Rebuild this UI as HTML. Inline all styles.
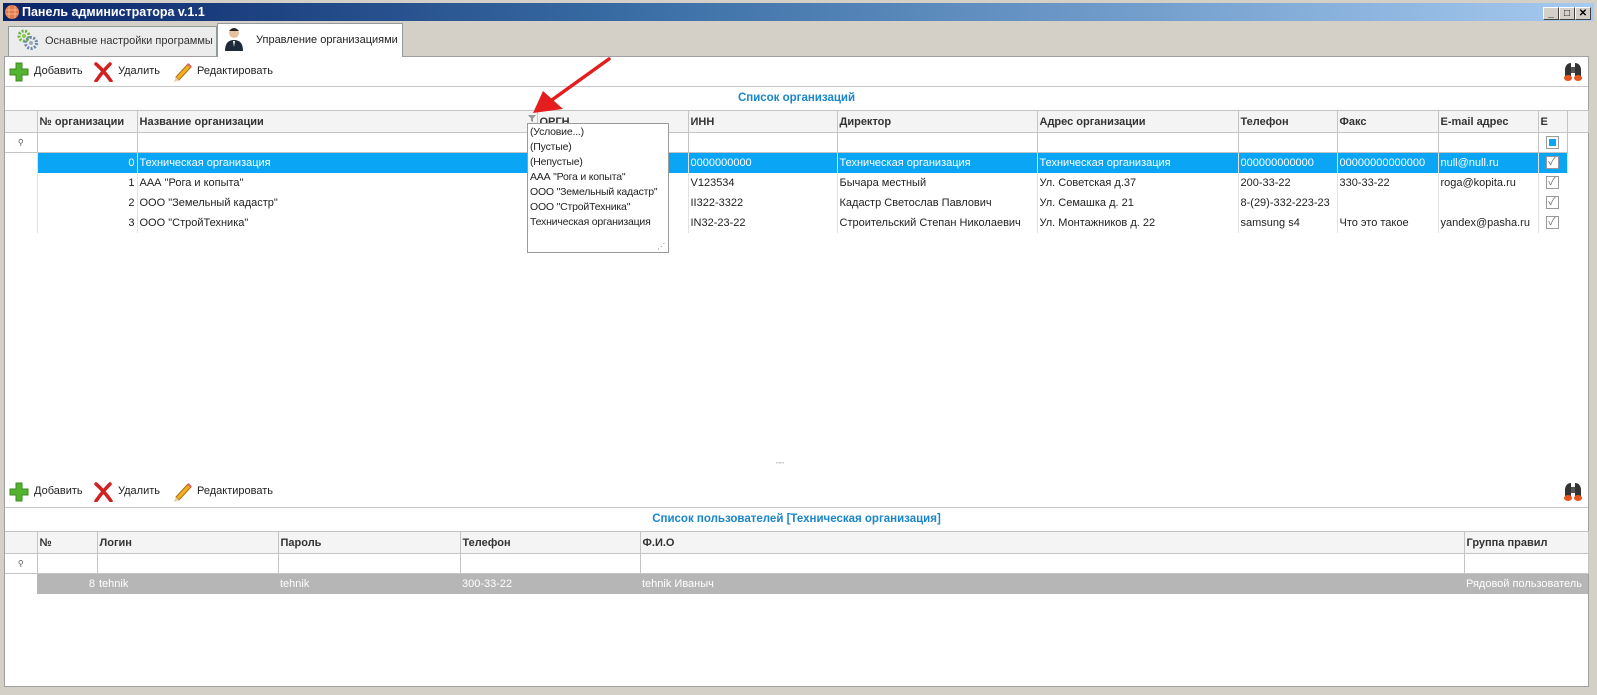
<!DOCTYPE html>
<html><head><meta charset="utf-8">
<style>
*{box-sizing:border-box;margin:0;padding:0}
body{width:1597px;height:695px;background:#d4d0c8;position:relative;overflow:hidden;font-family:"Liberation Sans","Noto Sans CJK SC",sans-serif;font-size:12px;color:#222}
.abs{position:absolute}
#title{left:3px;top:3px;width:1591px;height:18px;background:linear-gradient(90deg,#0a246a 0%,#3a6ea5 40%,#a6caf0 100%);color:#fff;font-weight:bold;font-size:12.5px;line-height:18px;padding-left:19px}
.wb{position:absolute;top:7px;width:16px;height:13px;background:#d4d0c8;border:1px solid;border-color:#fff #404040 #404040 #fff;font-size:10px;line-height:11px;text-align:center;color:#000;font-weight:bold}
#content{left:4px;top:56px;width:1585px;height:631px;background:#fff;border:1px solid #a0a0a0}
.tab{position:absolute;border:1px solid #919b9c;border-bottom:none;font-size:11px;line-height:28px;white-space:nowrap;overflow:hidden}
.tb{position:absolute;font-size:11px;color:#222;white-space:nowrap}
.cap{position:absolute;color:#1a86c8;font-weight:bold;font-size:11.5px;text-align:center}
table{border-collapse:collapse;table-layout:fixed;position:absolute}
td{white-space:nowrap;overflow:hidden;padding:0 2px;font-size:11px;height:20px}
tr.h td{background:#f4f4f4;font-weight:bold;color:#333;height:22px;border:1px solid #c4c4c4}
tr.f td{border:1px solid #c4c4c4;height:20px}
tr.d td{border-left:1px solid #e2e2e2}
tr.sel td{background:#0aa6f5;color:#fff}
tr.gr td{background:#b6b6b6;color:#fff}
td.ind{background:#fff!important;border-left:none!important;font-size:8px;color:#555;text-align:center}
.num{text-align:right}
.cb{display:inline-block;width:13px;height:13px;border:1px solid #9a9a9a;background:#fff;vertical-align:middle;position:relative;margin-left:5px;color:#777;font-size:11px;line-height:11px;text-align:center}
#dd{left:527px;top:123px;width:142px;height:130px;background:#fff;border:1px solid #9a9a9a;font-size:10.5px;letter-spacing:-0.2px;line-height:15px;padding:1px 2px;white-space:nowrap;overflow:hidden}
</style></head><body>
<div id="title" class="abs">Панель администратора v.1.1</div>
<svg class="abs" style="left:4px;top:4px" width="16" height="16"><circle cx="8" cy="8" r="7" fill="#e07a4a"/><path d="M2 6h12M2 10h12M5 2v12M11 2v12" stroke="#f7b08a" stroke-width="1"/></svg>
<div class="wb" style="left:1543px">_</div><div class="wb" style="left:1559px">□</div><div class="wb" style="left:1575px">✕</div>

<div class="tab" style="left:8px;top:26px;width:209px;height:30px;background:#ececec;padding-left:36px;color:#333">Оснавные настройки программы</div>
<svg class="abs" style="left:16px;top:28px" width="24" height="24"><circle cx="8" cy="8" r="5" fill="none" stroke="#6cb33f" stroke-width="3" stroke-dasharray="2 1.5"/><circle cx="8" cy="8" r="2" fill="#8c4"/><circle cx="15" cy="15" r="5.5" fill="none" stroke="#6a86a8" stroke-width="3" stroke-dasharray="2 1.5"/><circle cx="15" cy="15" r="2" fill="#9ab"/></svg>
<div class="tab" style="left:217px;top:23px;width:186px;height:34px;background:#fff;padding-left:38px;line-height:32px;z-index:2">Управление организациями</div>
<svg class="abs" style="left:223px;top:26px;z-index:3" width="22" height="26"><circle cx="11" cy="7" r="5" fill="#e8c0a0"/><path d="M6 5q5-6 10 0" fill="#222"/><path d="M2 25q0-11 9-11t9 11z" fill="#1e2a3a"/><path d="M10 15l1 6 1-6z" fill="#fff"/></svg>

<div id="content" class="abs"></div>
<div class="abs" style="left:5px;top:86px;width:1583px;height:1px;background:#c8c8c8"></div>

<svg class="abs" style="left:9px;top:62px" width="20" height="20"><path d="M7 1h6v6h6v6h-6v6H7v-6H1V7h6z" fill="#55b332" stroke="#3d8a22"/></svg>
<div class="tb" style="left:34px;top:65px">Добавить</div>
<svg class="abs" style="left:93px;top:62px" width="20" height="20"><path d="M3 2q8 7 15 17M17 2Q10 9 3 19" stroke="#d42020" stroke-width="3.5" fill="none" stroke-linecap="round"/></svg>
<div class="tb" style="left:118px;top:65px">Удалить</div>
<svg class="abs" style="left:172px;top:61px" width="22" height="22"><path d="M4 16L16 3l3 3L7 19z" fill="#f0b020" stroke="#b07010"/><path d="M4 16l-2 5 5-2z" fill="#e8c898"/><path d="M16 3l3 3" stroke="#e06060" stroke-width="2"/></svg>
<div class="tb" style="left:197px;top:65px">Редактировать</div>
<svg class="abs" style="left:1562px;top:61px" width="22" height="22"><path d="M3 8q1-6 6-6v16H3zM13 2q5 0 6 6v10h-6z" fill="#333"/><ellipse cx="6" cy="17" rx="4" ry="3" fill="#e8541c"/><ellipse cx="16" cy="17" rx="4" ry="3" fill="#e8541c"/><rect x="9" y="6" width="4" height="6" fill="#555"/></svg>

<div class="cap" style="left:5px;top:92px;width:1583px">Список организаций</div>

<table style="left:5px;top:110px;width:1583px">
<colgroup><col style="width:32px"><col style="width:100px"><col style="width:400px"><col style="width:151px"><col style="width:149px"><col style="width:200px"><col style="width:201px"><col style="width:99px"><col style="width:101px"><col style="width:100px"><col style="width:29px"><col style="width:21px"></colgroup>
<tr class="h"><td style="border-left:none"></td><td>№ организации</td><td>Название организации</td><td>ОРГН</td><td>ИНН</td><td>Директор</td><td>Адрес организации</td><td>Телефон</td><td>Факс</td><td>E-mail адрес</td><td>E</td><td></td></tr>
<tr class="f"><td class="ind">⚲</td><td></td><td></td><td></td><td></td><td></td><td></td><td></td><td></td><td></td><td><span class="cb"><span style="position:absolute;left:2px;top:2px;width:7px;height:7px;background:#0aa6f5"></span></span></td><td style="border:none"></td></tr>
<tr class="d sel"><td class="ind">▶</td><td class="num">0</td><td>Техническая организация</td><td></td><td>0000000000</td><td>Техническая организация</td><td>Техническая организация</td><td>000000000000</td><td>00000000000000</td><td>null@null.ru</td><td><span class="cb">✓</span></td><td style="background:#fff"></td></tr>
<tr class="d"><td class="ind">&nbsp;</td><td class="num">1</td><td>ААА "Рога и копыта"</td><td></td><td>V123534</td><td>Бычара местный</td><td>Ул. Советская д.37</td><td>200-33-22</td><td>330-33-22</td><td>roga@kopita.ru</td><td><span class="cb">✓</span></td><td style="border:none"></td></tr>
<tr class="d"><td class="ind">&nbsp;</td><td class="num">2</td><td>ООО "Земельный кадастр"</td><td></td><td>II322-3322</td><td>Кадастр Светослав Павлович</td><td>Ул. Семашка д. 21</td><td>8-(29)-332-223-23</td><td></td><td></td><td><span class="cb">✓</span></td><td style="border:none"></td></tr>
<tr class="d"><td class="ind">&nbsp;</td><td class="num">3</td><td>ООО "СтройТехника"</td><td></td><td>IN32-23-22</td><td>Строительский Степан Николаевич</td><td>Ул. Монтажников д. 22</td><td>samsung s4</td><td>Что это такое</td><td>yandex@pasha.ru</td><td><span class="cb">✓</span></td><td style="border:none"></td></tr>
</table>

<svg class="abs" style="left:528px;top:114px" width="9" height="9"><path d="M0 1h8L5 4.5V8L3 7V4.5z" fill="#999"/></svg>
<div id="dd" class="abs">(Условие...)<br>(Пустые)<br>(Непустые)<br>ААА "Рога и копыта"<br>ООО "Земельный кадастр"<br>ООО "СтройТехника"<br>Техническая организация<span style="position:absolute;right:3px;bottom:1px;font-size:8px;color:#888;line-height:8px">⋰</span></div>
<svg class="abs" style="left:525px;top:55px" width="90" height="65"><path d="M84 4L24 47" stroke="#e41e1e" stroke-width="3.5" stroke-linecap="round"/><path d="M8 58L18 36 38 54z" fill="#e41e1e"/></svg>

<div class="abs" style="left:776px;top:464px;font-size:7px;color:#aaa;line-height:4px">''''''</div>

<svg class="abs" style="left:9px;top:482px" width="20" height="20"><path d="M7 1h6v6h6v6h-6v6H7v-6H1V7h6z" fill="#55b332" stroke="#3d8a22"/></svg>
<div class="tb" style="left:34px;top:485px">Добавить</div>
<svg class="abs" style="left:93px;top:482px" width="20" height="20"><path d="M3 2q8 7 15 17M17 2Q10 9 3 19" stroke="#d42020" stroke-width="3.5" fill="none" stroke-linecap="round"/></svg>
<div class="tb" style="left:118px;top:485px">Удалить</div>
<svg class="abs" style="left:172px;top:481px" width="22" height="22"><path d="M4 16L16 3l3 3L7 19z" fill="#f0b020" stroke="#b07010"/><path d="M4 16l-2 5 5-2z" fill="#e8c898"/><path d="M16 3l3 3" stroke="#e06060" stroke-width="2"/></svg>
<div class="tb" style="left:197px;top:485px">Редактировать</div>
<svg class="abs" style="left:1562px;top:481px" width="22" height="22"><path d="M3 8q1-6 6-6v16H3zM13 2q5 0 6 6v10h-6z" fill="#333"/><ellipse cx="6" cy="17" rx="4" ry="3" fill="#e8541c"/><ellipse cx="16" cy="17" rx="4" ry="3" fill="#e8541c"/><rect x="9" y="6" width="4" height="6" fill="#555"/></svg>
<div class="abs" style="left:5px;top:507px;width:1583px;height:1px;background:#c8c8c8"></div>

<div class="cap" style="left:5px;top:513px;width:1583px">Список пользователей [Техническая организация]</div>

<table style="left:5px;top:531px;width:1583px">
<colgroup><col style="width:32px"><col style="width:60px"><col style="width:181px"><col style="width:182px"><col style="width:180px"><col style="width:824px"><col style="width:124px"></colgroup>
<tr class="h"><td style="border-left:none"></td><td>№</td><td>Логин</td><td>Пароль</td><td>Телефон</td><td>Ф.И.О</td><td>Группа правил</td></tr>
<tr class="f"><td class="ind">⚲</td><td></td><td></td><td></td><td></td><td></td><td></td></tr>
<tr class="gr"><td class="ind">▶</td><td class="num">8</td><td>tehnik</td><td>tehnik</td><td>300-33-22</td><td>tehnik Иваныч</td><td>Рядовой пользователь</td></tr>
</table>
</body></html>
